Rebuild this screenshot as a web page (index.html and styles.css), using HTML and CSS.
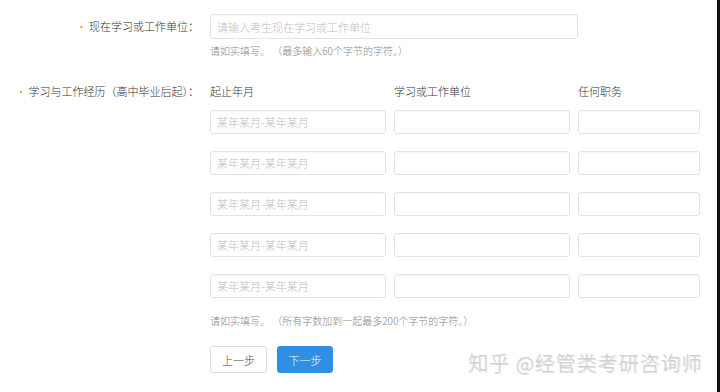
FILE: index.html
```html
<!DOCTYPE html>
<html lang="zh-CN">
<head>
  <meta charset="UTF-8" />
  <title>学习与工作经历</title>
  <link rel="stylesheet" href="styles.css">
</head>
<body>
  <div class="page">
    <div class="row row-unit">
      <div class="label"><span class="req">•</span>现在学习或工作单位：</div>
      <div class="field">
        <input class="inp inp-wide" type="text" placeholder="请输入考生现在学习或工作单位">
        <p class="hint">请如实填写。 （最多输入60个字节的字符。）</p>
      </div>
    </div>

    <div class="row row-exp">
      <div class="label"><span class="req">•</span>学习与工作经历（高中毕业后起）：</div>
      <div class="field">
        <div class="grid">
          <div class="head">起止年月</div>
          <div class="head">学习或工作单位</div>
          <div class="head">任何职务</div>

          <input class="inp" type="text" placeholder="某年某月-某年某月">
          <input class="inp" type="text">
          <input class="inp" type="text">

          <input class="inp" type="text" placeholder="某年某月-某年某月">
          <input class="inp" type="text">
          <input class="inp" type="text">

          <input class="inp" type="text" placeholder="某年某月-某年某月">
          <input class="inp" type="text">
          <input class="inp" type="text">

          <input class="inp" type="text" placeholder="某年某月-某年某月">
          <input class="inp" type="text">
          <input class="inp" type="text">

          <input class="inp" type="text" placeholder="某年某月-某年某月">
          <input class="inp" type="text">
          <input class="inp" type="text">
        </div>
        <p class="hint hint-bottom">请如实填写。 （所有字数加到一起最多200个字节的字符。）</p>
        <div class="actions">
          <button class="btn">上一步</button>
          <button class="btn btn-primary">下一步</button>
        </div>
      </div>
    </div>

    <div class="watermark">知乎 @经管类考研咨询师</div>
  </div>
</body>
</html>
```

FILE: styles.css
```css
* {
  box-sizing: border-box;
}

body {
  margin: 0;
  background: #fff;
  font-family: "Noto Sans CJK SC", "Noto Sans", sans-serif;
  color: #444;
}

.page {
  position: relative;
  width: 720px;
  height: 392px;
  border-right: 3px solid #111;
  padding-top: 14px;
}

.row {
  display: flex;
}

.label {
  width: 199px;
  flex: none;
  text-align: right;
  font-size: 11px;
  font-weight: 300;
  color: #333;
  line-height: 24px;
  padding-right: 0;
}

.req {
  color: #f08c1e;
  margin-right: 2px;
}

.field {
  margin-left: 11px;
}

.inp {
  display: block;
  height: 24px;
  border: 1px solid #e3e3e3;
  border-radius: 3px;
  padding: 0 6px;
  font-family: inherit;
  font-size: 11px;
  font-weight: 300;
  color: #444;
  background: #fff;
  box-shadow: inset 0 1px 1px rgba(0, 0, 0, 0.03);
  outline: none;
}

.inp::placeholder {
  color: #bdbdbd;
}

.inp-wide {
  width: 368px;
  height: 25px;
}

.hint {
  margin: 5px 0 0;
  font-size: 10px;
  font-weight: 300;
  color: #888;
  line-height: 14px;
  white-space: pre;
}

.row-exp {
  margin-top: 21px;
}

.grid {
  display: grid;
  grid-template-columns: 176px 176px 122px;
  column-gap: 8px;
  row-gap: 17px;
}

.head {
  font-size: 11px;
  font-weight: 300;
  color: #333;
  line-height: 24px;
  margin-bottom: -10px;
}

.hint-bottom {
  margin-top: 16px;
}

.actions {
  display: flex;
  gap: 10px;
  margin-top: 18px;
}

.btn {
  width: 57px;
  height: 27px;
  border: 1px solid #ddd;
  border-radius: 3px;
  background: #fff;
  color: #444;
  font-family: inherit;
  font-size: 11px;
  font-weight: 300;
}

.btn-primary {
  width: 56px;
  border-color: #2f8fe5;
  background: #2f8fe5;
  color: #fff;
}

.watermark {
  position: absolute;
  left: 468px;
  top: 348px;
  font-size: 20px;
  font-weight: 300;
  color: #d0d0d0;
  text-shadow: 1px 1px 1px rgba(0, 0, 0, 0.15);
  letter-spacing: 1px;
  white-space: nowrap;
}
```
